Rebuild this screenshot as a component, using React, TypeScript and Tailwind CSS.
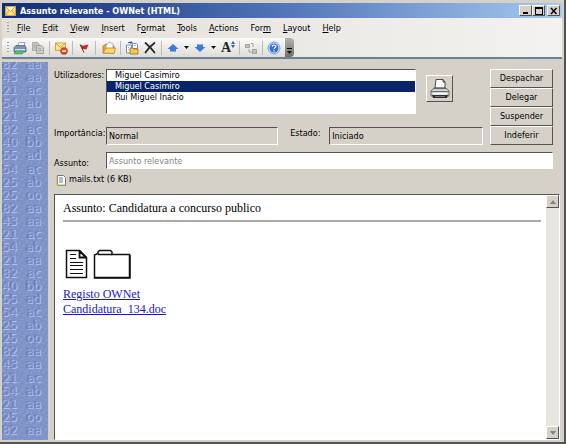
import type { ReactNode } from 'react'

const menus: [string, string, string][] = [
  ['', 'F', 'ile'],
  ['', 'E', 'dit'],
  ['', 'V', 'iew'],
  ['', 'I', 'nsert'],
  ['F', 'o', 'rmat'],
  ['', 'T', 'ools'],
  ['', 'A', 'ctions'],
  ['For', 'm', ''],
  ['', 'L', 'ayout'],
  ['', 'H', 'elp'],
]

const codes = ['82 aa', '43 aa', '21 ac', '54 ab', '21 aa', '82 ac', '40 bb', '55 ad', '54 ac', '25 ab', '25 oo']
const codeRows = [...codes, ...codes, ...codes.slice(0, 5), '25 oo', '82 aa']

const raised = 'border border-t-white border-l-white border-r-[#55534f] border-b-[#55534f] bg-[#d5d1c9]'
const sunken = 'border border-t-[#55534f] border-l-[#55534f] border-r-white border-b-white'

function Icon({ children }: { children: ReactNode }) {
  return (
    <svg viewBox="0 0 14 14" className="size-3.5 shrink-0" aria-hidden="true">
      {children}
    </svg>
  )
}

function Tool({ label, children }: { label: string; children: ReactNode }) {
  return (
    <button type="button" aria-label={label} className="flex h-4 w-[18px] shrink-0 items-center justify-center">
      {children}
    </button>
  )
}

function Drop({ label }: { label: string }) {
  return (
    <button type="button" aria-label={label} className="flex h-4 w-2 shrink-0 items-center justify-center">
      <svg viewBox="0 0 5 3" className="h-[3px] w-[5px]"><path d="M0 0h5L2.5 3z" fill="#111" /></svg>
    </button>
  )
}

function Sep() {
  return <span className="mx-[2px] h-3.5 w-px shrink-0 bg-[#bcbab5]" />
}

function Grip() {
  return (
    <svg viewBox="0 0 2 12" className="h-3 w-[2px] shrink-0" aria-hidden="true">
      <path d="M0 0h2v1H0zM0 3h2v1H0zM0 6h2v1H0zM0 9h2v1H0z" fill="#a5a29c" />
    </svg>
  )
}

function TitleBar() {
  return (
    <header className="flex h-[15px] items-center gap-1 bg-linear-to-r from-[#102c78] via-[#5275b8] to-[#a6caf0] pr-[2px] pl-[3px]">
      <svg viewBox="0 0 11 10" className="h-2.5 w-[11px] shrink-0" aria-hidden="true">
        <rect x=".5" y=".5" width="10" height="9" fill="#ffe28a" stroke="#e3a32e" />
        <path d="M1 1l4.500 4.500L10 1z" fill="#fff5ce" />
        <path d="M1 1l4.500 4.500L10 1M1 9l3-4.500M10 9L7 4.500" fill="none" stroke="#d78c1c" strokeWidth=".8" />
      </svg>
      <h1 className="flex-1 truncate leading-[14px] font-bold text-white">Assunto relevante - OWNet (HTML)</h1>
      <div className="flex">
        <button type="button" aria-label="Minimize" className={`flex h-[11px] w-[13px] items-center justify-center ${raised}`}>
          <svg viewBox="0 0 9 8" className="h-2 w-[9px]"><path d="M2 5h5v2H2z" /></svg>
        </button>
        <button type="button" aria-label="Maximize" className={`flex h-[11px] w-[13px] items-center justify-center ${raised}`}>
          <svg viewBox="0 0 9 8" className="h-2 w-[9px]"><path d="M1 0h8v8H1zM2 2v5h6V2z" fillRule="evenodd" /></svg>
        </button>
        <button type="button" aria-label="Close" className={`ml-[2px] flex h-[11px] w-[13px] items-center justify-center ${raised}`}>
          <svg viewBox="0 0 9 8" className="h-2 w-[9px]"><path d="M2 1l5.500 6M7.500 1L2 7" stroke="#000" strokeWidth="1.500" /></svg>
        </button>
      </div>
    </header>
  )
}

function MenuBar() {
  return (
    <nav className="flex h-5 items-center pl-[5px]">
      <Grip />
      <div className="ml-2 flex gap-3">
        {menus.map(([before, key, after]) => (
          <button key={before + key + after} type="button" className="leading-[14px]">
            {before}
            <span className="underline">{key}</span>
            {after}
          </button>
        ))}
      </div>
    </nav>
  )
}

function Toolbar() {
  return (
    <div className="flex h-[19px]" role="toolbar">
      <div className="flex items-center rounded-l-sm bg-linear-to-b from-[#fafaf9] to-[#dfddd8] pl-[5px]">
        <Grip />
        <span className="w-[2px]" />
        <Tool label="Print">
          <Icon>
            <path d="M4.500 5.500l1.500-4h6l-1 4z" fill="#fff" stroke="#7391b5" strokeWidth=".8" />
            <path d="M1 6.500l2-2h9l1 2V11H1z" fill="#7995ad" stroke="#405c78" strokeWidth=".7" />
            <path d="M2 8h10v1.500H2z" fill="#c6e3ef" />
            <path d="M2.500 10h8l-1 3h-8z" fill="#5cc36e" stroke="#35804a" strokeWidth=".6" />
          </Icon>
        </Tool>
        <Tool label="Copy">
          <Icon>
            <path d="M1.500 1.500h5l2 2v6h-7z" fill="#c4c2bf" stroke="#b0aeab" />
            <path d="M5.500 4.500h5l2 2v6h-7z" fill="#cfcdca" stroke="#a5a3a0" />
            <path d="M7 7.500h3M7 9.500h4M3 4h2M3 6h1" stroke="#a5a3a0" strokeWidth=".8" />
          </Icon>
        </Tool>
        <Sep />
        <Tool label="Junk">
          <Icon>
            <rect x="1.500" y="2" width="10" height="7.500" fill="#fde590" stroke="#d79a35" strokeWidth=".9" />
            <path d="M2 2.500L6.500 6.500 11 2.500" fill="none" stroke="#d79a35" />
            <circle cx="10" cy="10" r="3.500" fill="#dd4b24" stroke="#a92f12" strokeWidth=".5" />
            <path d="M8 9.300h4v1.500H8z" fill="#fff" />
          </Icon>
        </Tool>
        <Sep />
        <Tool label="Follow up">
          <Icon>
            <path d="M3 3.500l3 1.300 5.500-1.300-2 5-2-.6-2 .6z" fill="#c9291c" />
            <path d="M3 3.500l4 8" stroke="#7c332e" />
          </Icon>
        </Tool>
        <Sep />
        <span className="w-[2px]" />
        <Tool label="Open folder">
          <Icon>
            <path d="M1 5l3-2 2 1 6 1v7H1z" fill="#e5a838" stroke="#a6731d" strokeWidth=".7" />
            <path d="M4 5l3-4 4 2v5H4z" fill="#fff" stroke="#8197c0" strokeWidth=".7" />
            <path d="M1 12l3-5h9.500L12 12.500z" fill="#fcd66b" stroke="#ad7c25" strokeWidth=".7" />
          </Icon>
        </Tool>
        <Sep />
        <Tool label="Move to folder">
          <Icon>
            <path d="M1.500 4h5v8h-5z" fill="#fff" stroke="#5676b0" strokeWidth=".8" />
            <path d="M3 1.500h4M5.500 0L7 1.500 5.500 3" fill="none" stroke="#3460a8" />
            <path d="M7.500 2.500h4l1 1v4h-5z" fill="#fff" stroke="#5676b0" strokeWidth=".8" />
            <path d="M5 7h3l1 1h4v5H5z" fill="#f5c750" stroke="#9e701c" strokeWidth=".8" />
            <path d="M3 6.500h1M3 8.500h1M9 4.500h2" stroke="#7190bf" strokeWidth=".7" />
          </Icon>
        </Tool>
        <Tool label="Delete">
          <Icon>
            <path d="M2.500 2c3 2.500 6 5.500 9 9.500M11.500 2c-3.500 2.500-6.500 5.500-9 9.500" fill="none" stroke="#252525" strokeWidth="1.700" strokeLinecap="round" />
          </Icon>
        </Tool>
        <Sep />
        <Tool label="Previous item">
          <Icon><path d="M7 3l5.500 5H10v2.500H4V8H1.500z" fill="#3b7bdd" /></Icon>
        </Tool>
        <Drop label="Previous item options" />
        <span className="w-px" />
        <Tool label="Next item">
          <Icon><path d="M4 3.500h6V6h2.500L7 11 1.500 6H4z" fill="#3b7bdd" /></Icon>
        </Tool>
        <Drop label="Next item options" />
        <span className="w-[2px]" />
        <Tool label="Font size">
          <span className="font-['Liberation_Serif',serif] text-[14px] leading-4 font-bold text-[#222]">A</span>
          <svg viewBox="0 0 4 7" className="mb-1.5 h-[7px] w-1"><path d="M2 0l2 3H0zM0 4h4L2 7z" fill="#2f5f9f" /></svg>
        </Tool>
        <Sep />
        <Tool label="Convert">
          <Icon>
            <path d="M1.500 3.500h4v3h-4zM8.500 8.500h4v4h-4z" fill="#c2c0bd" stroke="#a3a19e" />
            <path d="M7 2.500h2V6M5 8v3h3" fill="none" stroke="#a3a19e" />
          </Icon>
        </Tool>
        <Sep />
        <Tool label="Help">
          <Icon>
            <circle cx="7" cy="7" r="6" fill="#cfe0fa" stroke="#7aa0dc" />
            <circle cx="7" cy="7" r="4.500" fill="#2f6fd8" />
            <path d="M5.200 5.800c0-2.400 3.700-2.300 3.700-.2 0 1.300-1.900 1.200-1.900 2.600M7 9.200v1.200" fill="none" stroke="#fff" strokeWidth="1.200" />
          </Icon>
        </Tool>
        <span className="w-[2px]" />
      </div>
      <button type="button" aria-label="Toolbar options" className="flex w-[9px] items-end justify-center rounded-r-sm bg-linear-to-b from-[#b4b2ad] to-[#737170] pb-[3px]">
        <svg viewBox="0 0 5 6" className="h-1.5 w-[5px]"><path d="M0 0h5v1H0z" /><path d="M0 3h5L2.500 6z" fill="#111" /></svg>
      </button>
    </div>
  )
}

function Sidebar() {
  return (
    <aside aria-hidden="true" className="grid w-[46px] shrink-0 overflow-hidden bg-[#8094c9]">
      <svg className="col-start-1 row-start-1 h-full w-full">
        <defs>
          <pattern id="speckle" width="12" height="10" patternUnits="userSpaceOnUse">
            <path d="M0 1h2v1H0zM5 0h1v2H5zM9 3h2v1H9zM3 5h1v1H3zM7 7h2v1H7zM1 8h1v2H1z" fill="#8c9fd1" />
            <path d="M3 2h1v1H3zM7 1h2v1H7zM0 5h2v1H0zM6 4h1v2H6zM10 7h1v1h-1zM4 8h1v1H4z" fill="#788bc2" />
          </pattern>
        </defs>
        <rect width="100%" height="100%" fill="url(#speckle)" />
      </svg>
      <div className="col-start-1 row-start-1 -mt-1 flex flex-col justify-between pb-1 font-['DejaVu_Sans',sans-serif] text-[12px] leading-3 text-[#7b8ec6] [text-shadow:1px_1px_0_#b3c1e5,-1px_0_0_#6577af]">
        {codeRows.map((row, i) => (
          <div key={i} className="flex justify-between pr-[7px]">
            <span>{row.slice(0, 2)}</span>
            <span>{row.slice(3)}</span>
          </div>
        ))}
      </div>
    </aside>
  )
}

function Form() {
  return (
    <form className="pr-[7px]">
      <div className="flex gap-[7px]">
        <div className="flex flex-1 flex-col gap-[13px]">
          <div className="flex items-start">
            <label htmlFor="users" className="w-[52px] shrink-0 leading-[13px]">Utilizadores:</label>
            <select
              id="users"
              size={4}
              defaultValue="2"
              className={`h-[45px] min-w-0 flex-1 appearance-none overflow-hidden bg-white ${sunken}`}
            >
              {['Miguel Casimiro', 'Miguel Casimiro', 'Rui Miguel Inácio'].map((name, i) => (
                <option
                  key={i}
                  value={String(i + 1)}
                  className="h-[11px] min-h-0 py-0 pr-0 pl-2 leading-[11px] checked:bg-linear-to-r checked:from-[#0a246a] checked:to-[#0a246a] checked:[-webkit-text-fill-color:white]"
                >
                  {name}
                </option>
              ))}
            </select>
            <button type="button" aria-label="Imprimir" className={`mt-1.5 mr-[30px] ml-[10px] flex size-[27px] items-center justify-center ${raised}`}>
              <svg viewBox="0 0 20 20" className="size-5">
                <path d="M5 9L6 .5h7L15 3v6z" fill="#fff" stroke="#222" strokeWidth=".8" />
                <path d="M13 .5V3h2" fill="none" stroke="#222" strokeWidth=".8" />
                <path d="M1 12l3-3h12l3 3v5H1z" fill="#d0d2cf" stroke="#555" strokeWidth=".8" />
                <path d="M4 9.500h12M1 12.500h18" stroke="#555" strokeWidth=".8" />
                <path d="M3 14h14v1.500H3z" fill="#fff" />
                <path d="M2 16h16l-1 3H3z" fill="#303030" />
                <path d="M5 17.500h10" stroke="#999" strokeWidth=".7" />
              </svg>
            </button>
          </div>
          <div className="flex items-start">
            <label htmlFor="importance" className="w-[52px] shrink-0 leading-[13px]">Importância:</label>
            <input id="importance" readOnly defaultValue="Normal" className={`h-[18px] w-0 min-w-0 flex-[173] bg-transparent px-0.5 ${sunken}`} />
            <label htmlFor="state" className="ml-3 w-[39px] shrink-0 leading-[13px]">Estado:</label>
            <input id="state" readOnly defaultValue="Iniciado" className={`h-[18px] w-0 min-w-0 flex-[154] bg-transparent px-0.5 ${sunken}`} />
          </div>
        </div>
        <div className="flex w-[63px] flex-col">
          {['Despachar', 'Delegar', 'Suspender', 'Indeferir'].map((action) => (
            <button key={action} type="button" className={`h-[19px] leading-[15px] ${raised}`}>{action}</button>
          ))}
        </div>
      </div>
      <div className="mt-[7px] flex items-end">
        <label htmlFor="subject" className="w-[52px] shrink-0 leading-[11px]">Assunto:</label>
        <input id="subject" defaultValue="Assunto relevante" className={`h-[17px] min-w-0 flex-1 bg-white px-0.5 text-[#85837f] ${sunken}`} />
      </div>
    </form>
  )
}

function Message() {
  return (
    <section className={`flex flex-1 bg-white ${sunken}`}>
      <article className="flex-1 pt-1.5 pr-1 pl-2 font-['Liberation_Serif',serif] text-[12px] leading-[15px]">
        <p>Assunto: Candidatura a concurso publico</p>
        <hr className="mt-1 border-t-2 border-[#aaa]" />
        <div className="mt-[27px] flex gap-[5px] pl-[2px]">
          <svg viewBox="0 0 23 30" className="h-[30px] w-[23px]" aria-hidden="true">
            <path d="M1.500 1.500h13l7 7v20h-20z" fill="#fff" stroke="#111" strokeWidth="1.500" />
            <path d="M14.500 1.500v7h7M14.500 2l6.500 6.500" fill="none" stroke="#111" strokeWidth="1.800" />
            <path d="M5 5.500h6M5 9.500h6M5 13.500h13M5 16.500h13M5 20.500h13M5 24.500h13" stroke="#111" />
          </svg>
          <svg viewBox="0 0 38 30" className="h-[30px] w-[38px]" aria-hidden="true">
            <path d="M1.500 28.500V6L5 4.500V3l1.500-1.500h11L19 3v2.500h17.500v23z" fill="#fff" stroke="#111" strokeWidth="1.500" />
            <path d="M5 5.500h14M37 6v23H1" fill="none" stroke="#111" strokeWidth="1.500" />
          </svg>
        </div>
        <div className="mt-2 flex flex-col items-start text-[#1414d8] underline">
          <a href="#registo">Registo OWNet</a>
          <a href="#candidatura">Candidatura_134.doc</a>
        </div>
      </article>
      <div className="ml-px flex w-[13px] flex-col justify-between bg-[#e9e6e2]">
        <button type="button" aria-label="Scroll up" className={`flex h-[13px] items-center justify-center ${raised}`}>
          <svg viewBox="0 0 6 4" className="h-1 w-1.5"><path d="M3 0l3 4H0z" fill="#85827c" /></svg>
        </button>
        <button type="button" aria-label="Scroll down" className={`flex h-[13px] items-center justify-center ${raised}`}>
          <svg viewBox="0 0 6 4" className="h-1 w-1.5"><path d="M0 0h6L3 4z" fill="#85827c" /></svg>
        </button>
      </div>
    </section>
  )
}

export default function App() {
  return (
    <div className="flex min-h-screen flex-col border-r-2 border-b-2 border-[#55534f] bg-[#d5d1c9] pt-[3px] pr-[2px] pb-[2px] pl-[2px] font-['DejaVu_Sans_Condensed','DejaVu_Sans',sans-serif] text-[9px] text-black">
      <TitleBar />
      <div className="border-b-2 border-[#6d7f92] bg-linear-to-r from-[#e2dfd9] to-[#f4f2f0]">
        <MenuBar />
        <Toolbar />
      </div>
      <div className="flex flex-1 pt-[3px]">
        <Sidebar />
        <main className="flex flex-1 flex-col pt-[7px] pr-[2px] pl-1.5">
          <Form />
          <div className="mt-1 mb-2 flex items-center gap-[2px] pl-[2px] leading-[13px]">
            <svg viewBox="0 0 11 12" className="h-3 w-[11px]" aria-hidden="true">
              <path d="M1.500 1.500h6l2 2v8h-8z" fill="#fff" stroke="#6f7a82" />
              <path d="M3 4h4M3 6h4M3 8h4" stroke="#4d80ba" />
              <path d="M1 2v9h8" fill="none" stroke="#c3b055" />
            </svg>
            mails.txt (6 KB)
          </div>
          <Message />
        </main>
      </div>
    </div>
  )
}
